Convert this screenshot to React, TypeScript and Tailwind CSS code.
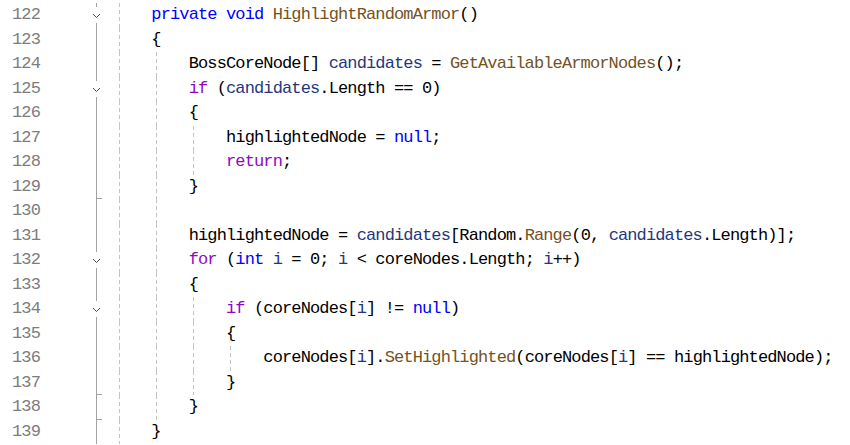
type Kind = "t" | "k" | "c" | "m" | "l";

type Tok = [string, Kind?];

interface Row {
  n: number;
  indent: number;
  toks: Tok[];
  fold?: boolean; // chevron in the outline margin
  tick?: boolean; // end-of-region marker at the bottom of the row
  guides: number; // number of indent levels with a dashed guide
}

const colors: Record<Kind, string> = {
  t: "text-[#000000]",
  k: "text-[#0000ff]",
  c: "text-[#8f08c4]",
  m: "text-[#74531f]",
  l: "text-[#1f377f]",
};

const rows: Row[] = [
  { n: 122, indent: 4, fold: true, guides: 1, toks: [["private void", "k"], [" "], ["HighlightRandomArmor", "m"], ["()"]] },
  { n: 123, indent: 4, guides: 1, toks: [["{"]] },
  {
    n: 124,
    indent: 8,
    guides: 2,
    toks: [["BossCoreNode[] "], ["candidates", "l"], [" = "], ["GetAvailableArmorNodes", "m"], ["();"]],
  },
  { n: 125, indent: 8, fold: true, guides: 2, toks: [["if", "c"], [" ("], ["candidates", "l"], [".Length == 0)"]] },
  { n: 126, indent: 8, guides: 2, toks: [["{"]] },
  { n: 127, indent: 12, guides: 3, toks: [["highlightedNode = "], ["null", "k"], [";"]] },
  { n: 128, indent: 12, guides: 3, toks: [["return", "c"], [";"]] },
  { n: 129, indent: 8, tick: true, guides: 2, toks: [["}"]] },
  { n: 130, indent: 8, guides: 2, toks: [] },
  {
    n: 131,
    indent: 8,
    guides: 2,
    toks: [
      ["highlightedNode = "],
      ["candidates", "l"],
      ["[Random."],
      ["Range", "m"],
      ["(0, "],
      ["candidates", "l"],
      [".Length)];"],
    ],
  },
  {
    n: 132,
    indent: 8,
    fold: true,
    guides: 2,
    toks: [["for", "c"], [" ("], ["int", "k"], [" "], ["i", "l"], [" = 0; "], ["i", "l"], [" < coreNodes.Length; "], ["i", "l"], ["++)"]],
  },
  { n: 133, indent: 8, guides: 2, toks: [["{"]] },
  {
    n: 134,
    indent: 12,
    fold: true,
    guides: 3,
    toks: [["if", "c"], [" (coreNodes["], ["i", "l"], ["] != "], ["null", "k"], [")"]],
  },
  { n: 135, indent: 12, guides: 3, toks: [["{"]] },
  {
    n: 136,
    indent: 16,
    guides: 4,
    toks: [["coreNodes["], ["i", "l"], ["]."], ["SetHighlighted", "m"], ["(coreNodes["], ["i", "l"], ["] == highlightedNode);"]],
  },
  { n: 137, indent: 12, tick: true, guides: 3, toks: [["}"]] },
  { n: 138, indent: 8, tick: true, guides: 2, toks: [["}"]] },
  { n: 139, indent: 4, guides: 1, toks: [["}"]] },
];

// outline margin: vertical region line, chevrons and end ticks
function Margin({ row }: { row: Row }) {
  return (
    <div className="flex h-full w-[74px] pl-[52px]">
      {row.fold ? (
        <div className="flex h-full w-[9px] flex-col items-center">
          <div className="h-[4px] w-px bg-[#a3a3a3]" />
          <svg className="mt-[6px]" width="9" height="6" viewBox="0 0 9 6">
            <polyline points="1,1 4.5,4.5 8,1" fill="none" stroke="#4d4d4d" strokeWidth="1" />
          </svg>
          <div className="mt-[4px] w-px flex-1 bg-[#a3a3a3]" />
        </div>
      ) : (
        <div className="flex h-full w-[9px] flex-col items-center">
          <div className="w-px flex-1 bg-[#a3a3a3]" />
          {row.tick && <div className="ml-[4px] h-px w-[6px] self-start bg-[#a3a3a3]" />}
        </div>
      )}
    </div>
  );
}

export default function App() {
  return (
    <div className="h-[445px] w-[850px] overflow-hidden bg-white pt-[3px] font-['Liberation_Mono',monospace] text-[17px] tracking-[-0.87px]">
      {rows.map((row) => (
        <div key={row.n} className="flex h-[24.5px] items-center">
          <div className="w-[40px] text-right leading-[24.5px] text-[#7d7d7d]">{row.n}</div>
          <Margin row={row} />
          <div className="flex h-full flex-1">
            {Array.from({ length: row.guides }).map((_, g) => (
              <div key={g} className="h-full w-[37.33px] shrink-0 pl-[4.5px]">
                <div className="h-full w-px bg-[repeating-linear-gradient(to_bottom,#c4c4c4_0_4px,transparent_4px_7px)]" />
              </div>
            ))}
            <div className="whitespace-pre leading-[24.5px]">
              {" ".repeat(Math.max(0, row.indent - row.guides * 4))}
              {row.toks.map((tk, i) => (
                <span key={i} className={colors[tk[1] ?? "t"]}>
                  {tk[0]}
                </span>
              ))}
            </div>
          </div>
        </div>
      ))}
    </div>
  );
}
